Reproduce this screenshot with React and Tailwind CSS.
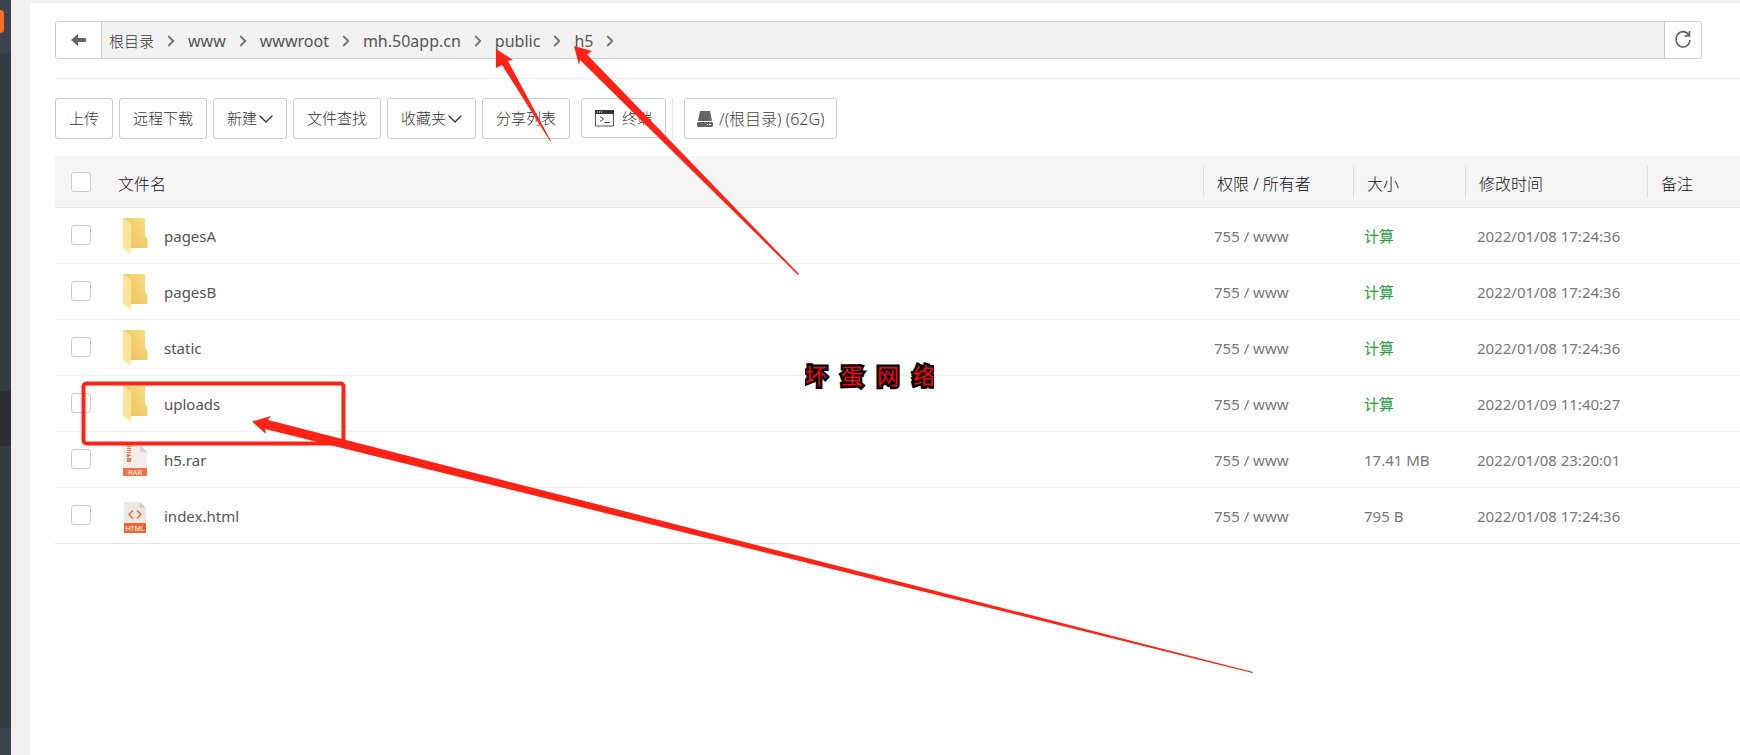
import { ChevronDown, ChevronRight } from 'lucide-react';

const crumbs = ['根目录', 'www', 'wwwroot', 'mh.50app.cn', 'public', 'h5'];

const files = [
  { name: 'pagesA', type: 'folder', time: '2022/01/08 17:24:36' },
  { name: 'pagesB', type: 'folder', time: '2022/01/08 17:24:36' },
  { name: 'static', type: 'folder', time: '2022/01/08 17:24:36' },
  { name: 'uploads', type: 'folder', time: '2022/01/09 11:40:27' },
  { name: 'h5.rar', type: 'rar', size: '17.41 MB', time: '2022/01/08 23:20:01' },
  { name: 'index.html', type: 'html', size: '795 B', time: '2022/01/08 17:24:36' },
];

const toolButton = 'flex h-[41px] shrink-0 items-center rounded-[3px] border border-[#ccc] bg-white px-[13px] text-[15px] font-light text-[#333] hover:bg-gray-50';

const FolderIcon = () => (
  <svg width="26" height="36" viewBox="0 0 26 36" aria-hidden="true">
    <defs>
      <linearGradient id="folderBack" x1="0" x2="1" y1="1" y2="0">
        <stop offset="0" stopColor="#e8c35c" />
        <stop offset="1" stopColor="#fbdc80" />
      </linearGradient>
    </defs>
    <path d="M0 0h22v18l2.500 3v9H0z" fill="url(#folderBack)" />
    <path d="M0 0l8 6v29.500L0 30z" fill="#ffe597" />
  </svg>
);

const RarIcon = () => (
  <svg width="26" height="36" viewBox="0 -3 26 36" aria-hidden="true">
    <path d="M0 0h17l7 7v24H0z" fill="#f3eeec" />
    <path d="M17 0l7 7h-7z" fill="#d6cfcb" />
    <path d="M4 1h4v1H6v1h2v1H4V3h2V2H4zM4 5h4v1H6v1h2v1H4V7h2V6H4zM4 9h2v1h2v1H6v1H4zM4 13h4v4H4zM5.500 14.500v1h1v-1z" fill="#f4703f" fillRule="evenodd" />
    <path d="M0 23h24v8H0z" fill="#f66f41" />
    <text x="12" y="29.500" textAnchor="middle" fontSize="7.500" fill="#fff">RAR</text>
  </svg>
);

const HtmlIcon = () => (
  <svg width="26" height="36" viewBox="0 -4 26 36" aria-hidden="true">
    <path d="M1 0h16l6 6v25H1z" fill="#e9e9e0" />
    <path d="M17 0l6 6h-6z" fill="#d0d0c4" />
    <path d="M10 8.500L6 12.500l4 4M14 8.500l4 4-4 4" fill="none" stroke="#f0683a" strokeWidth="1.500" />
    <path d="M1 21h22v10H1z" fill="#ee6531" />
    <text x="12" y="28.500" textAnchor="middle" fontSize="7" fill="#fff">HTML</text>
  </svg>
);

const icons = { folder: FolderIcon, rar: RarIcon, html: HtmlIcon };

const BackIcon = () => (
  <svg width="15" height="12" viewBox="0 0 15 12" fill="#666" aria-hidden="true">
    <path d="M0 6l7-6v4h8v4H7v4z" />
  </svg>
);

const TerminalIcon = () => (
  <svg width="19" height="17" viewBox="0 0 19 17" aria-hidden="true">
    <path d="M.5.5h18v15.500H.5z" fill="#fff" stroke="#5a4a5c" />
    <path d="M0 0h19v4H0z" fill="#333" />
    <path d="M2 2h1m1 0h1m1 0h1" stroke="#fff" />
    <path d="M5 6.500l3.500 2.500L5 11.500M9.500 12.500h5" fill="none" stroke="#444" />
  </svg>
);

const DiskIcon = () => (
  <svg width="16" height="16" viewBox="0 0 16 16" fill="#666" aria-hidden="true">
    <path d="M3 0h10l2 10H1z" />
    <path fillRule="evenodd" d="M1 11h14l1 1v3l-1 1H1l-1-1v-3zM10 13v1h1v-1zM12 13v1h2v-1z" />
  </svg>
);

const RefreshIcon = () => (
  <svg width="18" height="20" viewBox="0 0 18 20" fill="none" stroke="#666" strokeWidth="1.600" aria-hidden="true">
    <path d="M14.500 4.500A7 7.700 0 1 0 16 10" />
    <path d="M15.500 1v5h-5" />
    <path d="M15.500 2.500v3.500H12z" fill="#666" stroke="none" />
  </svg>
);

const DropArrow = () => <ChevronDown size={24} strokeWidth={1.25} className="-mr-[5px] -ml-[3px] shrink-0" />;

const Checkbox = ({ label }) => (
  <input
    type="checkbox"
    aria-label={label}
    className="block h-5 w-5 appearance-none rounded-[3px] border border-[#ccc] bg-white checked:bg-green-600"
  />
);

const HeadCell = ({ children }) => (
  <th className="p-0 pt-[2px] text-left font-light">
    <div className="flex h-8 items-center border-l border-[#ddd] pt-1 pl-[13px]">{children}</div>
  </th>
);

const FileRow = ({ file }) => {
  const Icon = icons[file.type];
  return (
    <tr className="h-14 border-b border-[#f0f0f0] last:border-[#e6e6e6] hover:bg-gray-50">
      <td className="pl-4">
        <Checkbox label={file.name} />
      </td>
      <td className="pt-[2px]">
        <div className="flex items-center gap-[15px] pl-2">
          <Icon />
          <a href={`#${file.name}`} className="text-[#555]">{file.name}</a>
        </div>
      </td>
      <td className="pt-[2px] pl-[11px]">755 / www</td>
      <td className="pt-[2px] pl-[11px]">
        {file.size ? file.size : <button type="button" className="text-[#20a53a]">计算</button>}
      </td>
      <td className="pt-[2px] pl-3">{file.time}</td>
      <td />
    </tr>
  );
};

// Hand-drawn marks laid over the file list
const Annotations = () => (
  <div className="pointer-events-none absolute inset-0">
    <svg className="absolute top-0 left-0 overflow-visible" width="1300" height="700" fill="#ff2215" aria-hidden="true">
      <path d="M496 49L513 60L508 61L551 141L550 141L502 65L496 68z" />
      <path d="M574 46L592 51L587 54.500L799 274L798 275L580 60L579 65z" />
      <path d="M252 421.500L271 416L268 420L1253 672L1252.500 673L265 429L266 434z" />
      <rect x="83.500" y="383.500" width="260" height="60" rx="3" fill="none" stroke="#ff2215" strokeWidth="4" />
    </svg>
    <span className="absolute top-[359px] left-[805px] flex w-[129px] gap-[14px] overflow-hidden text-[22px] leading-8 font-normal text-[#ff0010] [-webkit-text-stroke:5px_black] [paint-order:stroke_fill] [stroke-linejoin:round]">
      <span>坏</span>
      <span>蛋</span>
      <span>网</span>
      <span>络</span>
    </span>
  </div>
);

const App = () => (
  <div className="relative flex min-h-screen overflow-hidden bg-[#f1f1f1] font-['Noto_Sans','Noto_Sans_CJK_SC',sans-serif] text-[15px]">
    <aside className="flex w-[11px] shrink-0 flex-col bg-[#353d44]">
      <div className="h-[54px] bg-[#3d444d] pt-[10px]">
        <div className="h-[23px] w-1 rounded-r-[4px] bg-[#ff6c24]" />
      </div>
      <div className="mt-[337px] h-[55px] bg-[#2b2e37]" />
      <div className="mt-auto h-[27px] bg-[#3d444f]" />
    </aside>

    <main className="mt-[3px] ml-[19px] min-w-0 flex-1 bg-white pt-[18px] pl-[25px]">
      <div className="mr-[38px] flex h-[38px] rounded-[3px] border border-[#ccc] bg-[#f2f2f2]">
        <button type="button" aria-label="返回" className="flex w-[46px] items-center justify-center rounded-l-[3px] border-r border-[#ccc] bg-white">
          <BackIcon />
        </button>
        <nav className="flex flex-1 items-center pt-[2px] pl-[7px] text-base text-[#555]">
          {crumbs.map((crumb, index) => (
            <span key={crumb} className="flex items-center">
              <a href={`#${crumb}`} className={index === 0 ? 'text-[15px] font-light text-[#333]' : ''}>{crumb}</a>
              <ChevronRight size={18} strokeWidth={2.5} color="#777" className="mx-2" />
            </span>
          ))}
        </nav>
        <button type="button" aria-label="刷新" className="flex w-[37px] items-center justify-center rounded-r-[3px] border-l border-[#ccc] bg-white">
          <RefreshIcon />
        </button>
      </div>

      <div className="mt-[19px] flex border-t border-[#ececec] pt-[19px]">
        <div className="flex gap-[6px]">
          <button type="button" className={toolButton}>上传</button>
          <button type="button" className={toolButton}>远程下载</button>
          <button type="button" className={toolButton}>新建<DropArrow /></button>
          <button type="button" className={toolButton}>文件查找</button>
          <button type="button" className={toolButton}>收藏夹<DropArrow /></button>
          <button type="button" className={toolButton}>分享列表</button>
        </div>
        <div className="ml-[11px] border-r border-[#e6e6e6] pr-[6px]">
          <button type="button" className="flex h-10 items-center gap-2 rounded-[3px] border border-[#ccc] px-[13px] text-[15px] font-light text-[#333]">
            <TerminalIcon />
            终端
          </button>
        </div>
        <button type="button" className="ml-[11px] flex h-[41px] items-center gap-[6px] rounded-[3px] border border-[#ccc] px-3 text-base font-light text-[#444]">
          <DiskIcon />
          /(根目录) (62G)
        </button>
      </div>

      <table className="mt-[17px] w-full table-fixed border-collapse text-[#777]">
        <colgroup>
          <col className="w-[60px]" />
          <col />
          <col className="w-[150px]" />
          <col className="w-[112px]" />
          <col className="w-[182px]" />
          <col className="w-[93px]" />
        </colgroup>
        <thead>
          <tr className="h-[51px] border-b border-[#e6e6e6] bg-[#f5f5f5] text-base text-[#111]">
            <th className="p-0 pt-[2px] pl-4">
              <Checkbox label="全选" />
            </th>
            <th className="p-0 pt-[6px] pl-[3px] text-left font-light">文件名</th>
            <HeadCell>权限 / 所有者</HeadCell>
            <HeadCell>大小</HeadCell>
            <HeadCell>修改时间</HeadCell>
            <HeadCell>备注</HeadCell>
          </tr>
        </thead>
        <tbody>
          {files.map((file) => (
            <FileRow key={file.name} file={file} />
          ))}
        </tbody>
      </table>
    </main>

    <Annotations />
  </div>
);

export default App;
